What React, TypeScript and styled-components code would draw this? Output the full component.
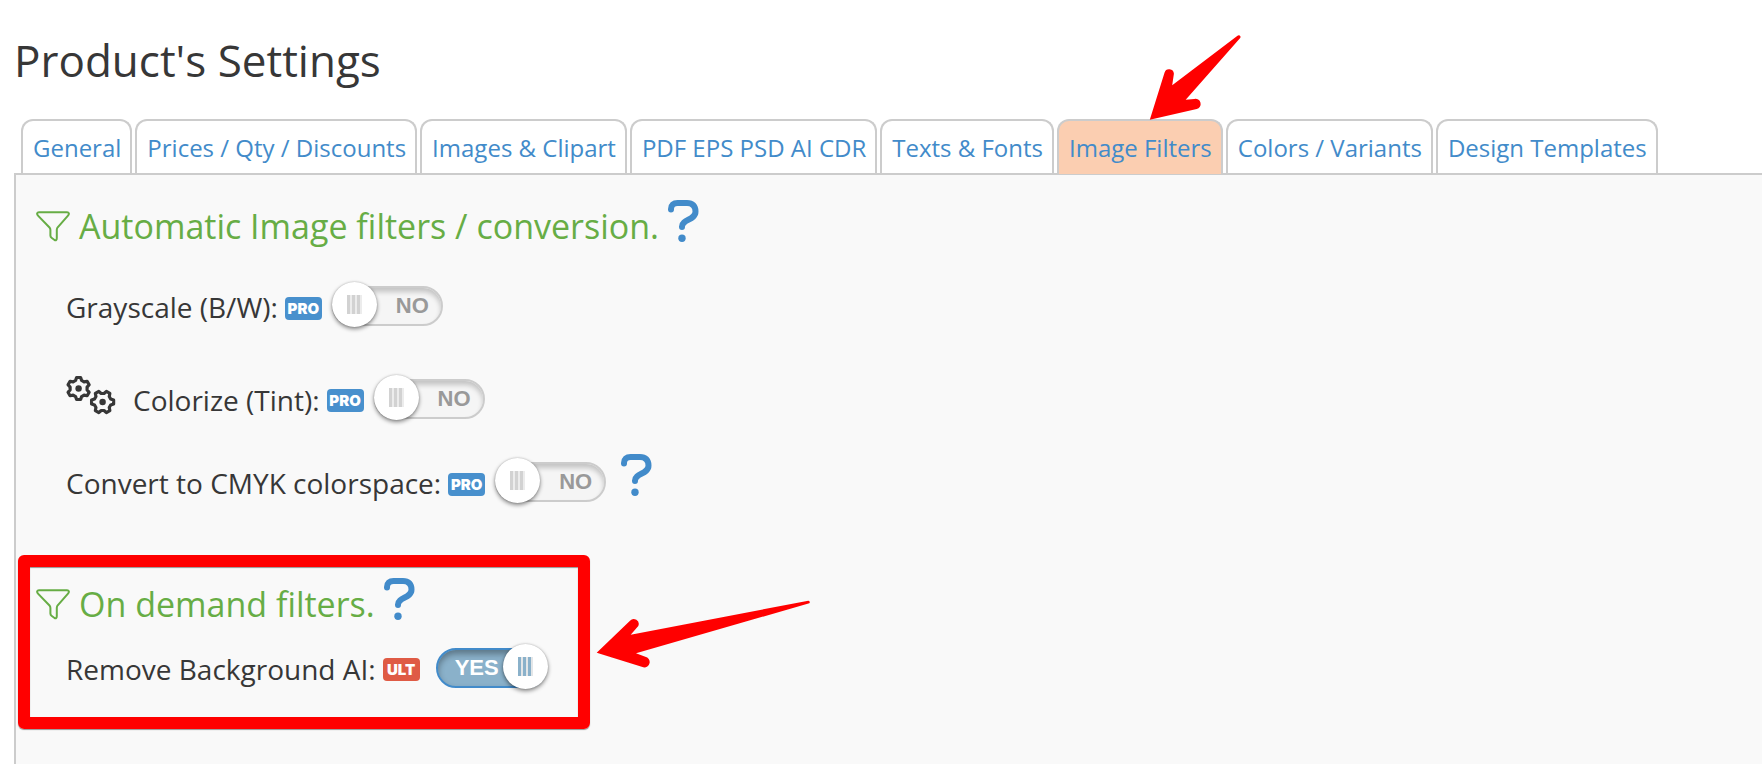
import React, { useState } from "react";
import styled, { createGlobalStyle, css } from "styled-components";

const GlobalStyle = createGlobalStyle`
  *, *::before, *::after { box-sizing: border-box; }
  body {
    margin: 0;
    background: #fff;
    color: #373737;
    font-family: "Open Sans", sans-serif;
    overflow-x: hidden;
  }
`;

const Page = styled.div`
  display: flex;
  flex-direction: column;
  min-height: 100vh;
  padding: 29px 0 0 14px;
`;

const Title = styled.h1`
  margin: 0;
  font-size: 44px;
  line-height: 62px;
  font-weight: 400;
`;

const Tabs = styled.nav`
  display: flex;
  gap: 3px;
  padding: 28px 7px 0;
`;

const Tab = styled.a<{ $active?: boolean }>`
  position: relative;
  flex: none;
  height: 54px;
  padding: 0 9px 0 10px;
  border: 2px solid #ccc;
  border-bottom: 0;
  border-radius: 12px 12px 0 0;
  color: #428bca;
  font-size: 24px;
  line-height: 54px;
  text-decoration: none;
  white-space: nowrap;
  ${(p) =>
    p.$active &&
    css`
      z-index: 1;
      height: 55px;
      margin-bottom: -1px;
      background: #fbceb1;
    `}
`;

const Panel = styled.main`
  flex: 1;
  padding: 19px 0 24px 2px;
  border: 2px solid #ccc;
  border-width: 2px 0 0 2px;
  background: #f9f9f9;
`;

const Section = styled.section`
  padding: 0 18px;
`;

const Highlight = styled.section`
  position: relative;
  width: fit-content;
  margin-top: 32px;
  padding: 5px 31px 16px 6px;
  border: 12px solid #f00;
  border-radius: 6px;
  box-shadow: 0 1px 1px #0006, inset 0 1px 1px #0006;
`;

const Heading = styled.h2`
  display: flex;
  align-items: center;
  height: 64px;
  margin: 0;
  color: #67ad45;
  font-size: 34px;
  line-height: 64px;
  font-weight: 400;
  white-space: nowrap;
`;

const HeadingText = styled.span`
  margin: 0 9px;
`;

const Row = styled.div<{ $height: number }>`
  display: flex;
  align-items: center;
  height: ${(p) => p.$height}px;
  padding-left: 30px;
  font-size: 28px;
  white-space: nowrap;
`;

const Badge = styled.span<{ $color: string }>`
  width: 37px;
  height: 23px;
  margin: 2px 10px 0 7px;
  border-radius: 4px;
  background: ${(p) => p.$color};
  color: #fff;
  font: 900 15px/23px Inter, sans-serif;
  text-align: center;
`;

const Switch = styled.span<{ $gap?: number }>`
  position: relative;
  display: grid;
  width: 111px;
  height: 40px;
  margin: 0 0 2px ${(p) => p.$gap ?? 0}px;
`;

const SwitchInput = styled.input`
  grid-area: 1 / 1;
  appearance: none;
  width: 100%;
  height: 40px;
  margin: 0;
  border: 2px solid #ccc;
  border-radius: 20px;
  background: #f5f5f5;
  box-shadow: inset 0 4px 5px #0003;
  cursor: pointer;
  &:checked {
    border-color: #428bca;
    background: #8ab1ca;
    box-shadow: inset 0 4px 6px #0005;
  }
`;

const SwitchText = styled.span<{ $on: boolean }>`
  grid-area: 1 / 1;
  z-index: 1;
  padding-left: ${(p) => (p.$on ? 19 : 64)}px;
  color: ${(p) => (p.$on ? "#fff" : "#999")};
  font: 700 22px/39px "Liberation Sans", sans-serif;
  pointer-events: none;
`;

const Knob = styled.span<{ $on: boolean }>`
  position: absolute;
  z-index: 2;
  top: -4px;
  ${(p) => (p.$on ? "right: -1px;" : "left: 0;")}
  display: flex;
  align-items: center;
  justify-content: center;
  width: 45px;
  height: 45px;
  border-radius: 50%;
  background: #fff;
  box-shadow: 0 2px 4px #0007, 0 0 2px #0003;
  pointer-events: none;
`;

const Grip = styled.span<{ $on: boolean }>`
  width: 5px;
  height: 19px;
  border-right: 2px solid ${(p) => (p.$on ? "#e3e6e8" : "#ececec")};
  background: ${(p) => (p.$on ? "#8ab1ca" : "#d2d2d2")};
`;

const HelpButton = styled.button`
  height: 42px;
  padding: 0;
  border: 0;
  margin-bottom: 11px;
  background: none;
  color: #428bca;
  cursor: pointer;
  svg { display: block; }
`;

const RowHelp = styled(HelpButton)`
  margin: 0 0 16px 15px;
`;

const GearsIcon = styled.svg`
  margin: 0 17px 10px 0;
`;

const TabArrow = styled.svg`
  position: absolute;
  left: 81px;
  bottom: 52px;
`;

const BoxArrow = styled.svg`
  position: absolute;
  left: 560px;
  top: 23px;
`;

const Funnel = () => (
  <svg width="34" height="31" viewBox="0 0 34 31" fill="none" stroke="currentColor" strokeWidth="2" aria-hidden="true">
    <path d="M3 1.2H31C33 1.2 33.5 3 32 4.6L21.5 16.5Q20.8 17.5 20.8 19V27Q20.8 30 18.5 29L15.5 26.8Q14.4 26 14.4 24.5V19Q14.4 17.5 13.5 16.5L2 4.6C.5 3 1 1.2 3 1.2Z" />
  </svg>
);

const Question = () => (
  <svg width="31" height="42" viewBox="0 0 31 42" fill="none" stroke="currentColor" strokeWidth="6" strokeLinecap="round" aria-hidden="true">
    <path d="M3 9.5V9C3 5 5.5 3 9.5 3H19C24.500 3 27.500 6 27.500 11.500C27.500 20.500 14 19 14 26.500V27" />
    <circle cx="14" cy="38.300" r="3.700" fill="currentColor" stroke="none" />
  </svg>
);

const gear = (cx: number, cy: number, turn: number) => {
  const points: string[] = [];
  for (let i = 0; i < 6; i++) {
    for (const [r, a] of [[8.6, -0.36], [11.2, -0.18], [11.2, 0.18], [8.6, 0.36]]) {
      const t = (i * 2 * Math.PI) / 6 + a + turn;
      points.push(`${(cx + r * Math.cos(t)).toFixed(2)},${(cy + r * Math.sin(t)).toFixed(2)}`);
    }
  }
  return points.join(" ");
};

const Gears = () => (
  <GearsIcon width="50" height="40" viewBox="0 0 50 40" aria-hidden="true">
    <g fill="none" stroke="currentColor" strokeWidth="3.2" strokeLinejoin="round">
      <polygon points={gear(12.6, 13.5, -Math.PI / 2)} />
      <polygon points={gear(36.6, 27, 0)} />
    </g>
    <circle cx="12.600" cy="13.500" r="3.200" fill="currentColor" />
    <circle cx="36.600" cy="27" r="3.200" fill="currentColor" />
  </GearsIcon>
);

const Toggle = ({ id, initial = false, gap }: { id: string; initial?: boolean; gap?: number }) => {
  const [on, setOn] = useState(initial);
  return (
    <Switch $gap={gap}>
      <SwitchInput id={id} type="checkbox" checked={on} onChange={(e) => setOn(e.target.checked)} />
      <SwitchText $on={on}>{on ? "YES" : "NO"}</SwitchText>
      <Knob $on={on}>
        <Grip $on={on} />
        <Grip $on={on} />
        <Grip $on={on} />
      </Knob>
    </Switch>
  );
};

const tabs = [
  "General",
  "Prices / Qty / Discounts",
  "Images & Clipart",
  "PDF EPS PSD AI CDR",
  "Texts & Fonts",
  "Image Filters",
  "Colors / Variants",
  "Design Templates",
];

export default function App() {
  return (
    <>
      <GlobalStyle />
      <Page>
        <Title>Product's Settings</Title>
        <Tabs>
          {tabs.map((name) => {
            const active = name === "Image Filters";
            return (
              <Tab key={name} href="#" $active={active} aria-current={active ? "page" : undefined}>
                {name}
                {active && (
                  <TabArrow width="105" height="96" viewBox="0 0 105 96" fill="#f00" aria-hidden="true">
                    <path d="M9.800 93.700L24.500 46.700A4.800 4.800 0 0 1 33.900 47.700L32.200 59.300L97.500 9.700A1.800 1.800 0 0 1 100.400 11.700L45.700 73.700L54.300 73A5 5 0 0 1 56.700 83Z" />
                  </TabArrow>
                )}
              </Tab>
            );
          })}
        </Tabs>
        <Panel>
          <Section>
            <Heading>
              <Funnel />
              <HeadingText>Automatic Image filters / conversion.</HeadingText>
              <HelpButton type="button" aria-label="Help: automatic image filters"><Question /></HelpButton>
            </Heading>
            <Row $height={98}>
              <label htmlFor="grayscale">Grayscale (B/W):</label>
              <Badge $color="#4890cd">PRO</Badge>
              <Toggle id="grayscale" />
            </Row>
            <Row $height={87}>
              <Gears />
              <label htmlFor="colorize">Colorize (Tint):</label>
              <Badge $color="#4890cd">PRO</Badge>
              <Toggle id="colorize" />
            </Row>
            <Row $height={80}>
              <label htmlFor="cmyk">Convert to CMYK colorspace:</label>
              <Badge $color="#4890cd">PRO</Badge>
              <Toggle id="cmyk" />
              <RowHelp type="button" aria-label="Help: CMYK colorspace"><Question /></RowHelp>
            </Row>
          </Section>
          <Highlight>
            <Heading>
              <Funnel />
              <HeadingText>On demand filters.</HeadingText>
              <HelpButton type="button" aria-label="Help: on demand filters"><Question /></HelpButton>
            </Heading>
            <Row $height={65}>
              <label htmlFor="remove-bg">Remove Background AI:</label>
              <Badge $color="#df5b45">ULT</Badge>
              <Toggle id="remove-bg" initial gap={6} />
            </Row>
            <BoxArrow width="225" height="82" viewBox="0 0 225 82" fill="#f00" aria-hidden="true">
              <path d="M6.700 62.700L40 30.700A5 5 0 0 1 48.300 36L40.700 44.700L218.300 10.700A1.500 1.500 0 0 1 219.300 13.300L46 63.300L55.300 66.700A5.300 5.300 0 0 1 53.300 77.300Z" />
            </BoxArrow>
          </Highlight>
        </Panel>
      </Page>
    </>
  );
}
